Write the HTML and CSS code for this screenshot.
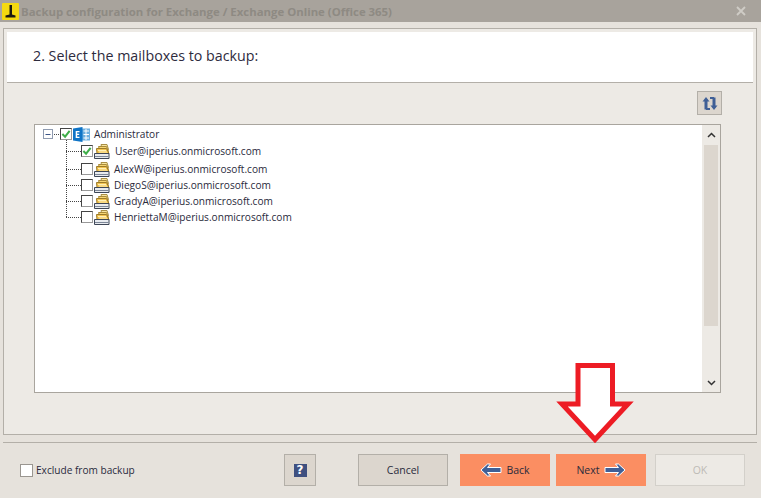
FILE: index.html
```html
<!DOCTYPE html>
<html lang="en">
<head>
<meta charset="utf-8">
<title>Backup configuration</title>
<link rel="stylesheet" href="styles.css">
</head>
<body>
<svg class="defs" width="0" height="0">
  <defs>
    <symbol id="box" viewBox="0 0 16 15">
      <path d="M7 .5h6l1.500 5H8z" fill="#f8e6a0" stroke="#a98f45"/>
      <path d="M4.500 2.500h8l2 5H6z" fill="#f6d672" stroke="#a98a3a"/>
      <path d="M2.500 4.500h10l2.500 5H3z" fill="#f3c44f" stroke="#9c7a28"/>
      <path d="M4 6.500h8M5 8h8" stroke="#fff0b8"/>
      <path d="M.5 9.500h14.500v5H.5z" fill="#e8ebef" stroke="#3d4656"/>
      <path d="M1 12.500h13.500" stroke="#7d8798"/>
    </symbol>
    <symbol id="tick" viewBox="0 0 11 11">
      <path d="M1.500 5.500l3 3L9.500 2" fill="none" stroke="#3fae49" stroke-width="2.200"/>
    </symbol>
  </defs>
</svg>
<div class="window">
  <header class="titlebar">
    <svg class="logo" viewBox="0 0 17 17" width="17" height="17">
      <rect width="17" height="17" rx="1" fill="#f5d90f"/>
      <path d="M7.500 2h2.500v9.500l3.500 1V14.500H3.500v-2l4-1z" fill="#1d1a10"/>
    </svg>
    <span class="title-text">Backup configuration for Exchange / Exchange Online (Office 365)</span>
    <svg class="close" viewBox="0 0 10 10" width="10" height="10"><path d="M1 1l8 8M9 1l-8 8" stroke="#cfccc6" stroke-width="1.800"/></svg>
  </header>

  <main class="panel">
    <div class="heading"><h1>2. Select the mailboxes to backup:</h1></div>
    <div class="tools">
      <button class="refresh" type="button" aria-label="Refresh">
        <svg viewBox="0 0 16 15" width="16" height="15">
          <path d="M4 13.500V3.500" stroke="#3f5f96" stroke-width="3" fill="none"/>
          <path d="M.5 5.500L4 1l3.500 4.500z" fill="#3f5f96"/>
          <path d="M12 1.500v10" stroke="#3f5f96" stroke-width="3" fill="none"/>
          <path d="M8.500 9.500L12 14l3.500-4.500z" fill="#3f5f96"/>
          <path d="M4 13h4M8 2h4" stroke="#3f5f96" stroke-width="2" fill="none"/>
        </svg>
      </button>
    </div>
    <div class="listbox">
      <div class="tree">
        <svg class="connectors" width="60" height="100" viewBox="0 0 60 100">
          <rect x="8.500" y="4.500" width="9" height="9" fill="#fff" stroke="#8f9bb0"/>
          <path d="M10.500 9.500h5" stroke="#3b5488"/>
          <path d="M19 9.500h6M31.500 15v78M31 26.500h15M31 44.500h15M31 60.500h15M31 76.500h15M31 92.500h15" stroke="#444" stroke-dasharray="1 1" fill="none"/>
        </svg>
        <div class="row row-root">
          <span class="check"><svg width="10" height="10"><use href="#tick"/></svg></span>
          <svg class="exch" viewBox="0 0 17 15" width="17" height="15">
            <rect x="6" y="1.500" width="11" height="12" fill="#6fb0e0"/>
            <path d="M10.500 4h5.500M10.500 7.500h5.500M10.500 11h5.500M13 2v11" stroke="#fff"/>
            <path d="M0 1.500L9.500 0v15L0 13.500z" fill="#0f74c6"/>
            <path d="M2.700 4h3.800v1.300H4.200v1.500h2v1.300h-2v1.700h2.300V11H2.700z" fill="#fff"/>
          </svg>
          <span class="name">Administrator</span>
        </div>
        <div class="row row-user">
          <span class="check"><svg width="10" height="10"><use href="#tick"/></svg></span>
          <svg class="box" width="16" height="15"><use href="#box"/></svg>
          <span class="name name-user">User@iperius.onmicrosoft.com</span>
        </div>
        <div class="row row-first">
          <span class="check"></span>
          <svg class="box" width="16" height="15"><use href="#box"/></svg>
          <span class="name">AlexW@iperius.onmicrosoft.com</span>
        </div>
        <div class="row">
          <span class="check"></span>
          <svg class="box" width="16" height="15"><use href="#box"/></svg>
          <span class="name">DiegoS@iperius.onmicrosoft.com</span>
        </div>
        <div class="row">
          <span class="check"></span>
          <svg class="box" width="16" height="15"><use href="#box"/></svg>
          <span class="name">GradyA@iperius.onmicrosoft.com</span>
        </div>
        <div class="row">
          <span class="check"></span>
          <svg class="box" width="16" height="15"><use href="#box"/></svg>
          <span class="name">HenriettaM@iperius.onmicrosoft.com</span>
        </div>
      </div>
      <div class="scrollbar">
        <svg class="chev" viewBox="0 0 9 6" width="9" height="6"><path d="M1 5l3.500-3.500L8 5" fill="none" stroke="#333" stroke-width="1.500"/></svg>
        <div class="thumb"></div>
        <svg class="chev chev-down" viewBox="0 0 9 6" width="9" height="6"><path d="M1 1l3.500 3.500L8 1" fill="none" stroke="#333" stroke-width="1.500"/></svg>
      </div>
    </div>
  </main>

  <footer class="footer">
    <label class="exclude"><span class="box-check"></span>Exclude from backup</label>
    <button class="btn help" type="button" aria-label="Help"><span class="help-mark">?</span></button>
    <button class="btn cancel" type="button">Cancel</button>
    <button class="btn orange back" type="button">
      <svg viewBox="0 0 22 14" width="22" height="14"><path d="M1 7l6.500-6h3L7.500 4.500h13.500v5H7.500l3 3.500h-3z" fill="#3f5f96" stroke="#fff" stroke-linejoin="round"/></svg>
      Back
    </button>
    <button class="btn orange next" type="button">
      Next
      <svg viewBox="0 0 22 14" width="22" height="14"><path d="M21 7l-6.500-6h-3l3 3.500H1v5h13.500l-3 3.500h3z" fill="#3f5f96" stroke="#fff" stroke-linejoin="round"/></svg>
    </button>
    <button class="btn ok" type="button">OK</button>
  </footer>

  <svg class="red-arrow" width="761" height="498" viewBox="0 0 761 498">
    <path d="M578 365.500h34.500V404h15.500L595 439.500 562 404h16z" fill="#fff" stroke="#ed1c24" stroke-width="5"/>
  </svg>
</div>
</body>
</html>
```
FILE: styles.css
```css
* { box-sizing: border-box; }
html, body { margin: 0; padding: 0; }
body { font-family: "Open Sans", "Noto Sans", sans-serif; color: #2b2b3a; background: #e6e2dc; }
.defs { position: absolute; }
.window { position: relative; width: 761px; height: 498px; display: flex; flex-direction: column; overflow: hidden; background: #e6e2dc; }

.titlebar { height: 22px; flex: none; background: #a8a39c; display: flex; align-items: center; padding: 0 15px 0 2px; }
.logo { flex: none; }
.title-text { margin-left: 2px; font: bold 11.400px "Open Sans", sans-serif; color: #8e8a83; flex: 1; white-space: nowrap; }
.close { flex: none; }

.panel { margin: 6px 4px 0 3px; height: 407px; flex: none; border: 1px solid #b3afa8; background: #edeae5; padding: 3px 3px 0 3px; display: flex; flex-direction: column; }
.heading { height: 51px; flex: none; background: #fff; border-bottom: 1px solid #b3afa8; display: flex; align-items: center; padding-left: 26px; }
.heading h1 { margin: 0 0 3px; font-size: 14.250px; font-weight: 400; color: #2e2b3e; white-space: nowrap; }

.tools { display: flex; justify-content: flex-end; padding: 8px 31px 0 0; height: 41px; flex: none; }
.refresh { width: 25px; height: 24px; padding: 0; background: #dcd6ce; border: 1px solid #b3afa8; display: flex; align-items: center; justify-content: center; }

.listbox { margin-left: 27px; margin-right: 32px; height: 269px; flex: none; border: 1px solid #a9a59e; display: flex; background: #fff; }
.tree { position: relative; flex: 1; padding-top: 1px; }
.connectors { position: absolute; left: 0; top: 0; }
.row { display: flex; align-items: center; height: 16px; padding-left: 46px; position: relative; font-size: 10.150px; color: #2a2a3c; white-space: nowrap; }
.row-root { padding-left: 25px; }
.row-user { margin-top: 1px; }
.row-first { margin-top: 2px; }
.check { width: 12px; height: 12px; flex: none; border: 1px solid #444; border-right-color: #999; border-bottom-color: #999; background: #fff; display: flex; align-items: center; justify-content: center; }
.exch { margin-left: 1px; flex: none; }
.box { margin-left: 1px; flex: none; }
.name { margin-left: 4px; }
.row-root .name { margin-left: 4px; }
.name-user { margin-left: 5px; }

.scrollbar { width: 18px; flex: none; background: #edeae5; display: flex; flex-direction: column; align-items: center; padding: 7px 0 6px; }
.chev { flex: none; }
.thumb { width: 14px; height: 181px; margin-top: 7px; background: #dcd6ce; }
.chev-down { margin-top: auto; }

.footer { margin: 7px 4px 0 3px; flex: none; border-top: 1px solid #b3afa8; padding: 11px 12px 0 17px; display: flex; align-items: flex-start; font-size: 10.500px; color: #2a2a3c; }
.exclude { display: flex; align-items: center; height: 32px; width: 264px; flex: none; font-size: 10.100px; }
.box-check { width: 13px; height: 13px; margin-right: 3px; border: 1px solid #9a9690; background: #fff; flex: none; }
.btn { height: 32px; font: inherit; color: inherit; display: flex; align-items: center; justify-content: center; padding: 0; flex: none; }
.help { width: 32px; background: #dcd6ce; border: 1px solid #b3afa8; margin-right: 42px; }
.help-mark { width: 13px; height: 13px; background: #3f5080; color: #fff; font: bold 12px/13px "DejaVu Sans", sans-serif; text-align: center; display: block; }
.cancel { width: 90px; background: #dcd6ce; border: 1px solid #b3afa8; margin-right: 12px; }
.orange { width: 90px; background: #fb8e62; border: 0; gap: 4px; }
.back { margin-right: 6px; }
.next { margin-right: 9px; }
.ok { width: 90px; background: #edeae5; border: 1px solid #d3d0ca; color: #bdbab5; }

.red-arrow { position: absolute; left: 0; top: 0; pointer-events: none; }
```
